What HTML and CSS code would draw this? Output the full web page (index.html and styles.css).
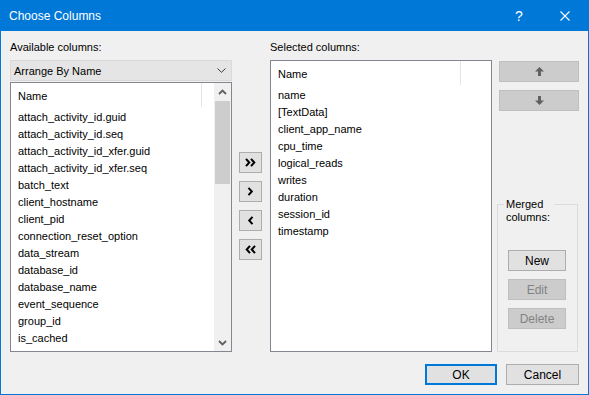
FILE: index.html
```html
<!DOCTYPE html>
<html lang="en">
<head>
  <meta charset="UTF-8">
  <meta name="viewport" content="width=device-width, initial-scale=1.0">
  <title>Choose Columns</title>
  <link rel="stylesheet" href="styles.css">
</head>
<body>
  <div class="window">
    <div class="titlebar">
      <span class="title">Choose Columns</span>
      <span class="caption-btn help">?</span>
      <span class="caption-btn close">
        <svg width="10" height="10" viewBox="0 0 10 10"><path d="M0.5 0.5 L9.5 9.5 M9.5 0.5 L0.5 9.5" stroke="#fff" stroke-width="1.1" fill="none"/></svg>
      </span>
    </div>

    <div class="dialog">
      <div class="main">
        <!-- available columns -->
        <div class="col-left">
          <div class="label">Available columns:</div>
          <div class="combo">
            <span>Arrange By Name</span>
            <svg width="9" height="5" viewBox="0 0 9 5"><path d="M0.5 0.5 L4.5 4.3 L8.5 0.5" stroke="#3c3c3c" stroke-width="1" fill="none"/></svg>
          </div>
          <div class="listview available">
            <div class="lv-body">
              <div class="lv-header"><span class="lv-col">Name</span></div>
              <ul class="lv-items">
                <li>attach_activity_id.guid</li>
                <li>attach_activity_id.seq</li>
                <li>attach_activity_id_xfer.guid</li>
                <li>attach_activity_id_xfer.seq</li>
                <li>batch_text</li>
                <li>client_hostname</li>
                <li>client_pid</li>
                <li>connection_reset_option</li>
                <li>data_stream</li>
                <li>database_id</li>
                <li>database_name</li>
                <li>event_sequence</li>
                <li>group_id</li>
                <li>is_cached</li>
              </ul>
            </div>
            <div class="scrollbar">
              <div class="sb-arrow">
                <svg width="9" height="6" viewBox="0 0 9 6"><path d="M1 5 L4.5 1.5 L8 5" stroke="#606060" stroke-width="1.8" fill="none"/></svg>
              </div>
              <div class="sb-track"><div class="sb-thumb"></div></div>
              <div class="sb-arrow">
                <svg width="9" height="6" viewBox="0 0 9 6"><path d="M1 1 L4.5 4.5 L8 1" stroke="#606060" stroke-width="1.8" fill="none"/></svg>
              </div>
            </div>
          </div>
        </div>

        <!-- move buttons -->
        <div class="col-move">
          <button class="btn move-btn">
            <svg width="11" height="9" viewBox="0 0 11 9"><path d="M1 0.8 L4.3 4.5 L1 8.2 M6 0.8 L9.3 4.5 L6 8.2" stroke="#000" stroke-width="2" fill="none"/></svg>
          </button>
          <button class="btn move-btn">
            <svg width="7" height="9" viewBox="0 0 7 9"><path d="M1.5 0.8 L4.8 4.5 L1.5 8.2" stroke="#000" stroke-width="2" fill="none"/></svg>
          </button>
          <button class="btn move-btn">
            <svg width="7" height="9" viewBox="0 0 7 9"><path d="M5.5 0.8 L2.2 4.5 L5.5 8.2" stroke="#000" stroke-width="2" fill="none"/></svg>
          </button>
          <button class="btn move-btn">
            <svg width="11" height="9" viewBox="0 0 11 9"><path d="M5 0.8 L1.7 4.5 L5 8.2 M10 0.8 L6.7 4.5 L10 8.2" stroke="#000" stroke-width="2" fill="none"/></svg>
          </button>
        </div>

        <!-- selected columns -->
        <div class="col-right">
          <div class="label">Selected columns:</div>
          <div class="listview selected">
            <div class="lv-body">
              <div class="lv-header"><span class="lv-col">Name</span></div>
              <ul class="lv-items">
                <li>name</li>
                <li>[TextData]</li>
                <li>client_app_name</li>
                <li>cpu_time</li>
                <li>logical_reads</li>
                <li>writes</li>
                <li>duration</li>
                <li>session_id</li>
                <li>timestamp</li>
              </ul>
            </div>
          </div>
        </div>

        <!-- order and merge -->
        <div class="col-side">
          <button class="btn order-btn" disabled>
            <svg width="9" height="9" viewBox="0 0 9 9"><path d="M4.5 0 L9 4.5 H6 V9 H3 V4.5 H0 Z" fill="#616161"/></svg>
          </button>
          <button class="btn order-btn" disabled>
            <svg width="9" height="9" viewBox="0 0 9 9"><path d="M4.5 9 L9 4.5 H6 V0 H3 V4.5 H0 Z" fill="#616161"/></svg>
          </button>
          <div class="groupbox">
            <span class="group-label">Merged<br>columns:</span>
            <button class="btn group-btn">New</button>
            <button class="btn group-btn" disabled>Edit</button>
            <button class="btn group-btn" disabled>Delete</button>
          </div>
        </div>
      </div>

      <div class="footer">
        <button class="btn footer-btn default">OK</button>
        <button class="btn footer-btn">Cancel</button>
      </div>
    </div>
  </div>
</body>
</html>
```

FILE: styles.css
```css
:root {
  --accent: #0078d7;
  --face: #f0f0f0;
  --btn-bg: #e1e1e1;
  --btn-border: #adadad;
  --disabled-bg: #cccccc;
  --disabled-border: #bfbfbf;
  --list-border: #828790;
}

* {
  box-sizing: border-box;
}

body {
  margin: 0;
  font-family: "Liberation Sans", Arial, sans-serif;
  font-size: 11px;
  color: #000;
  background: var(--face);
}

.window {
  width: 589px;
  height: 395px;
  background: var(--face);
  border: 1px solid var(--accent);
  border-top: none;
  display: flex;
  flex-direction: column;
}

/* title bar */
.titlebar {
  height: 31px;
  margin: 0 -1px;
  padding-left: 9px;
  background: var(--accent);
  color: #fff;
  display: flex;
  align-items: center;
}

.title {
  font-size: 12px;
  flex: 1;
  padding-top: 1px;
}

.caption-btn {
  width: 46px;
  height: 31px;
  display: flex;
  align-items: center;
  justify-content: center;
}

.help {
  font-size: 14px;
}

.close {
  margin-right: 1px;
  padding-top: 1px;
}

/* dialog body */
.dialog {
  flex: 1;
  display: flex;
  flex-direction: column;
  padding: 10px 9px 0 9px;
}

.main {
  display: flex;
  height: 311px;
}

.label {
  height: 13px;
  line-height: 13px;
  white-space: nowrap;
}

.col-left {
  width: 222px;
}

.combo {
  margin-top: 6px;
  height: 21px;
  background: #e5e5e5;
  border: 1px solid #d9d9d9;
  display: flex;
  align-items: center;
  justify-content: space-between;
  padding: 0 5px 0 3px;
}

.combo span {
  padding-top: 1px;
}

.listview {
  background: #fff;
  border: 1px solid var(--list-border);
  display: flex;
}

.listview.available {
  margin-top: 1px;
  height: 270px;
}

.listview.selected {
  margin-top: 6px;
  height: 292px;
}

.lv-body {
  flex: 1;
  overflow: hidden;
}

.lv-header {
  height: 26px;
  display: flex;
}

.lv-col {
  width: 191px;
  border-right: 1px solid #e5e5e5;
  padding: 7px 0 0 7px;
  height: 24px;
}

.selected .lv-col {
  width: 190px;
}

.lv-items {
  list-style: none;
  margin: 0;
  padding: 0;
}

.lv-items li {
  height: 17px;
  line-height: 17px;
  padding-left: 7px;
  white-space: nowrap;
}

.scrollbar {
  width: 17px;
  background: var(--face);
  display: flex;
  flex-direction: column;
}

.sb-arrow {
  height: 17px;
  display: flex;
  align-items: center;
  justify-content: center;
}

.sb-track {
  flex: 1;
  padding: 1px 1px 0 1px;
}

.sb-thumb {
  height: 83px;
  background: #cdcdcd;
}

/* buttons */
.btn {
  font-family: inherit;
  font-size: 11px;
  color: #000;
  background: var(--btn-bg);
  border: 1px solid var(--btn-border);
  padding: 0;
  margin: 0;
  height: 21px;
  display: flex;
  align-items: center;
  justify-content: center;
}

.btn:disabled {
  background: var(--disabled-bg);
  border-color: var(--disabled-border);
  color: #838383;
}

.col-move {
  width: 38px;
  padding: 111px 0 0 7px;
  display: flex;
  flex-direction: column;
  gap: 8px;
}

.move-btn {
  width: 23px;
}

.col-right {
  width: 222px;
}

.col-side {
  padding: 20px 0 0 7px;
  display: flex;
  flex-direction: column;
}

.order-btn {
  width: 80px;
  margin-bottom: 8px;
}

.groupbox {
  position: relative;
  margin: 85px 0 0 -2px;
  width: 81px;
  height: 148px;
  border: 1px solid #dcdcdc;
  padding: 45px 0 0 10px;
  display: flex;
  flex-direction: column;
  gap: 8px;
}

.group-label {
  position: absolute;
  left: 6px;
  top: -7px;
  line-height: 13px;
  font-size: 11px;
  padding: 0 4px 0 2px;
  background: var(--face);
}

.group-btn {
  width: 58px;
  font-size: 12px;
}

.footer {
  display: flex;
  justify-content: flex-end;
  gap: 9px;
  margin-top: 12px;
}

.footer-btn {
  width: 73px;
  font-size: 12px;
}

.footer-btn.default {
  width: 72px;
  border: 2px solid var(--accent);
}
```
